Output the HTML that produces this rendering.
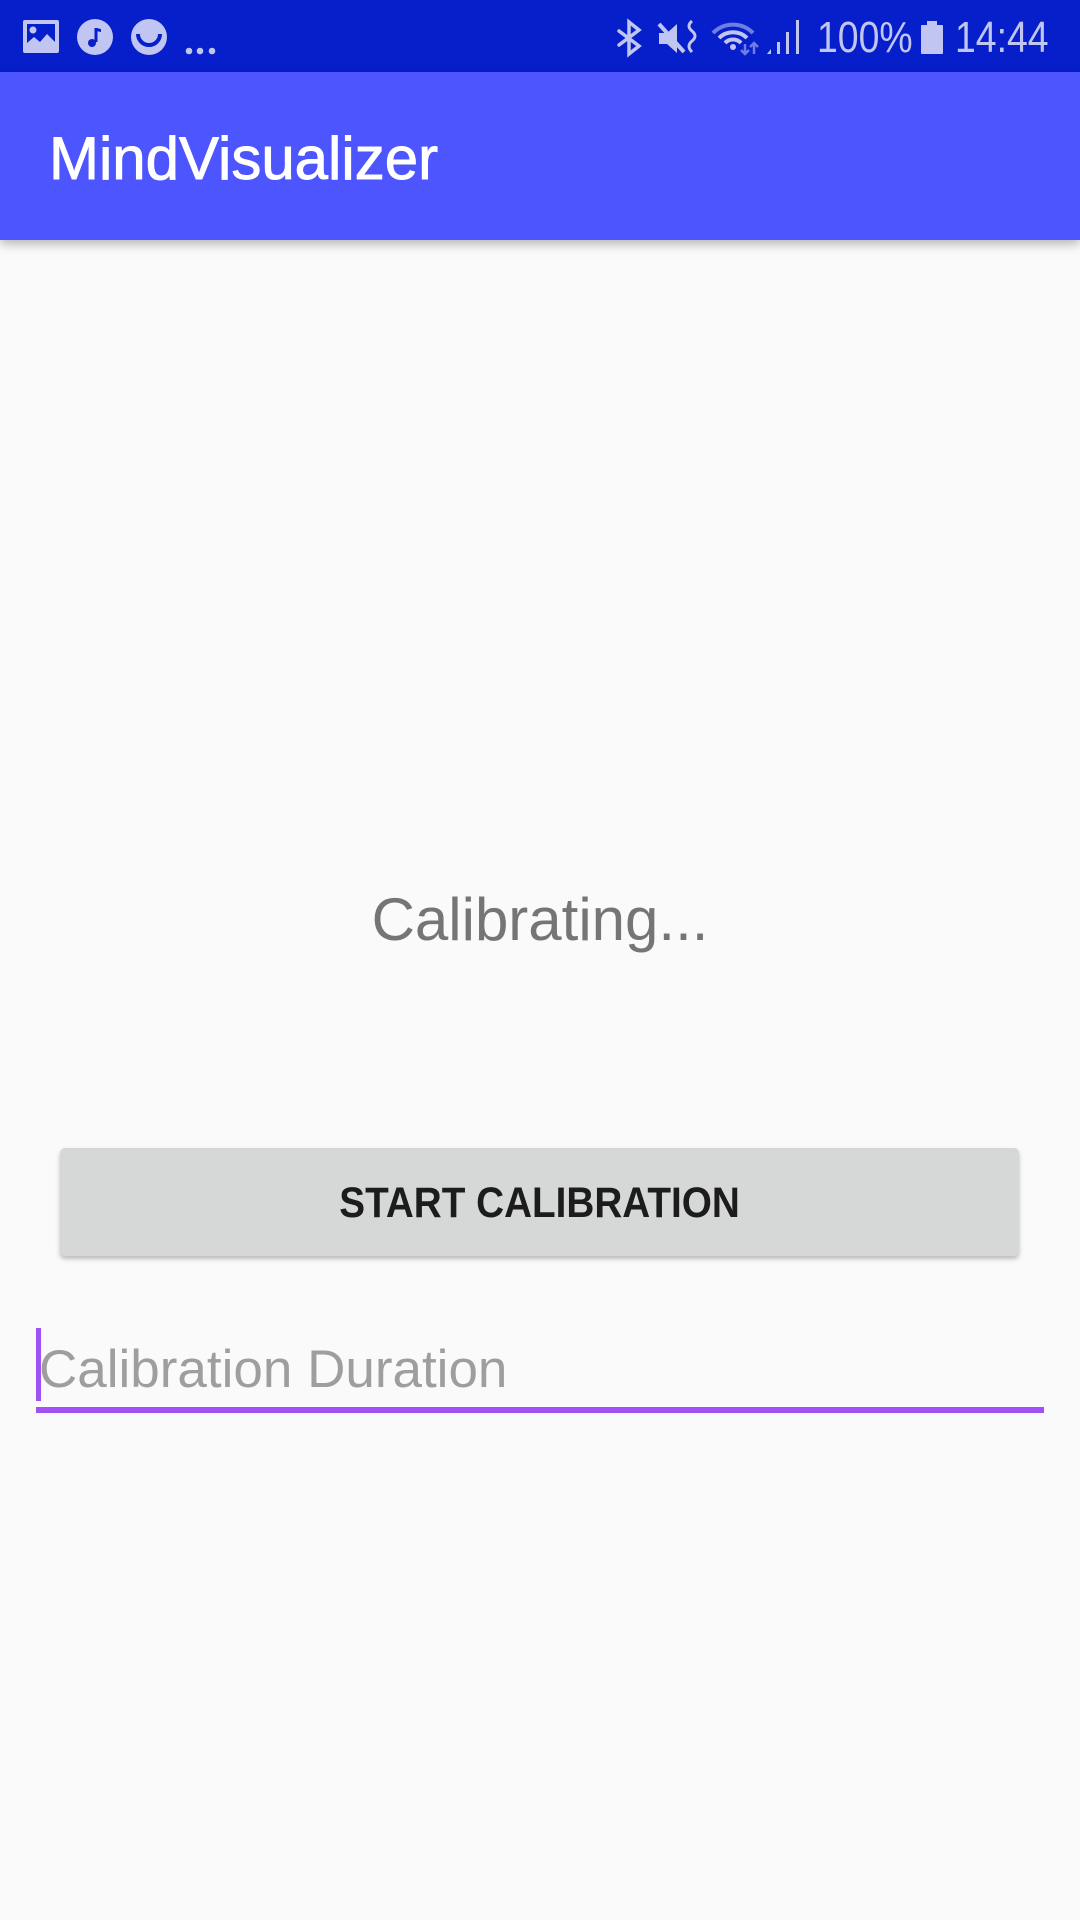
<!DOCTYPE html>
<html><head><meta charset="utf-8"><style>
*{margin:0;padding:0;box-sizing:border-box}
body{width:1080px;height:1920px;background:#fafafa;position:relative;overflow:hidden;font-family:"Liberation Sans",sans-serif}
.sb{position:absolute;left:0;top:0;width:1080px;height:72px;background:#061fcb}
.ab{position:absolute;left:0;top:72px;width:1080px;height:168px;background:#4c55fe;box-shadow:0 4px 10px rgba(0,0,0,0.28)}
.title{position:absolute;left:49px;top:119px;font-size:60px;line-height:80px;color:#fff;white-space:nowrap;-webkit-text-stroke:0.9px #fff}
.st{position:absolute;color:#c0c5f2;font-size:44px;line-height:44px;top:16px;white-space:nowrap;transform-origin:left top;transform:scaleX(0.85)}
.cal{position:absolute;left:0;width:1080px;top:880px;text-align:center;font-size:60px;line-height:80px;color:#757575}
.btn{position:absolute;left:60px;top:1148px;width:959px;height:108px;background:#d6d7d7;border-radius:5px;box-shadow:0 3px 5px rgba(0,0,0,0.25)}
.btn span{position:absolute;left:0;width:959px;top:31px;text-align:center;font-size:43px;line-height:48px;font-weight:bold;color:#1c1c1c}
.btn span i{display:inline-block;font-style:normal;transform:scaleX(0.9)}
.hint{position:absolute;left:39px;top:1338px;font-size:53px;line-height:64px;color:#9e9e9e;white-space:nowrap}
.cur{position:absolute;left:36px;top:1328px;width:5px;height:73px;background:#a052f5}
.line{position:absolute;left:36px;top:1407px;width:1008px;height:6px;background:#a052f5}
</style></head><body>
<div class="sb">
<svg width="1080" height="72" style="position:absolute;left:0;top:0">
<g fill="#c0c5f2">
<rect x="23" y="20" width="36" height="33" rx="2"/>
<circle cx="95" cy="37" r="18"/>
<circle cx="149" cy="37" r="18"/>
<circle cx="189" cy="51" r="3.3"/><circle cx="200" cy="51" r="3.3"/><circle cx="212" cy="51" r="3.3"/>
</g>
<rect x="27" y="24" width="28" height="25" fill="#061fcb"/>
<circle cx="33" cy="30" r="3.5" fill="#c0c5f2"/>
<path d="M27 49 L27 43 L34 37 L40 42 L47 34 L55 42 L55 49Z" fill="#c0c5f2"/>
<path d="M96 28 L96 42" stroke="#061fcb" stroke-width="3"/>
<circle cx="92" cy="43" r="4" fill="#061fcb"/>
<path d="M96 28 L101 29 L101 32 L96 31Z" fill="#061fcb"/>
<path d="M138 34 A11 11 0 0 0 160 34" stroke="#061fcb" stroke-width="4" fill="none"/>
<g stroke="#c0c5f2" stroke-width="3.5" fill="none" stroke-linecap="round">
<path d="M619 31 L639 46 L629 54 L629 22 L639 30 L619 45"/>
</g>
<path d="M659 33 L667 33 L677 24 L677 53 L667 44 L659 44Z" fill="#c0c5f2"/>
<path d="M659 24 L684 52" stroke="#c0c5f2" stroke-width="4"/>
<path d="M692 21 Q686 26 692 31 Q698 36 692 41 Q686 46 692 52" stroke="#c0c5f2" stroke-width="3" fill="none"/>
<path d="M713 33 A28 28 0 0 1 753 33" stroke="#6f7ee2" stroke-width="4" fill="none"/>
<path d="M719 38 A20 20 0 0 1 747 38" stroke="#c0c5f2" stroke-width="4" fill="none"/>
<path d="M725 43 A11 11 0 0 1 741 43" stroke="#c0c5f2" stroke-width="4" fill="none"/>
<circle cx="733" cy="47" r="3" fill="#c0c5f2"/>
<path d="M745 44 L745 54 M741 50 L745 54 L749 50 M754 54 L754 43 M750 47 L754 43 L758 47" stroke="#6f7ee2" stroke-width="2.5" fill="none"/>
<g fill="#c0c5f2"><path d="M767 54 L771 49 L771 54Z"/><rect x="777" y="42" width="3" height="12"/><rect x="786" y="32" width="3" height="22"/><rect x="796" y="20" width="3" height="34"/></g>
<rect x="921" y="25" width="22" height="29" rx="1" fill="#c0c5f2"/>
<rect x="927" y="21" width="10" height="5" fill="#c0c5f2"/>
</svg>
<div class="st" style="left:817px">100%</div>
<div class="st" style="left:955px">14:44</div>
</div>
<div class="ab"></div>
<div class="title">MindVisualizer</div>
<div class="cal">Calibrating...</div>
<div class="btn"><span><i>START CALIBRATION</i></span></div>
<div class="hint">Calibration Duration</div>
<div class="cur"></div>
<div class="line"></div>
</body></html>
